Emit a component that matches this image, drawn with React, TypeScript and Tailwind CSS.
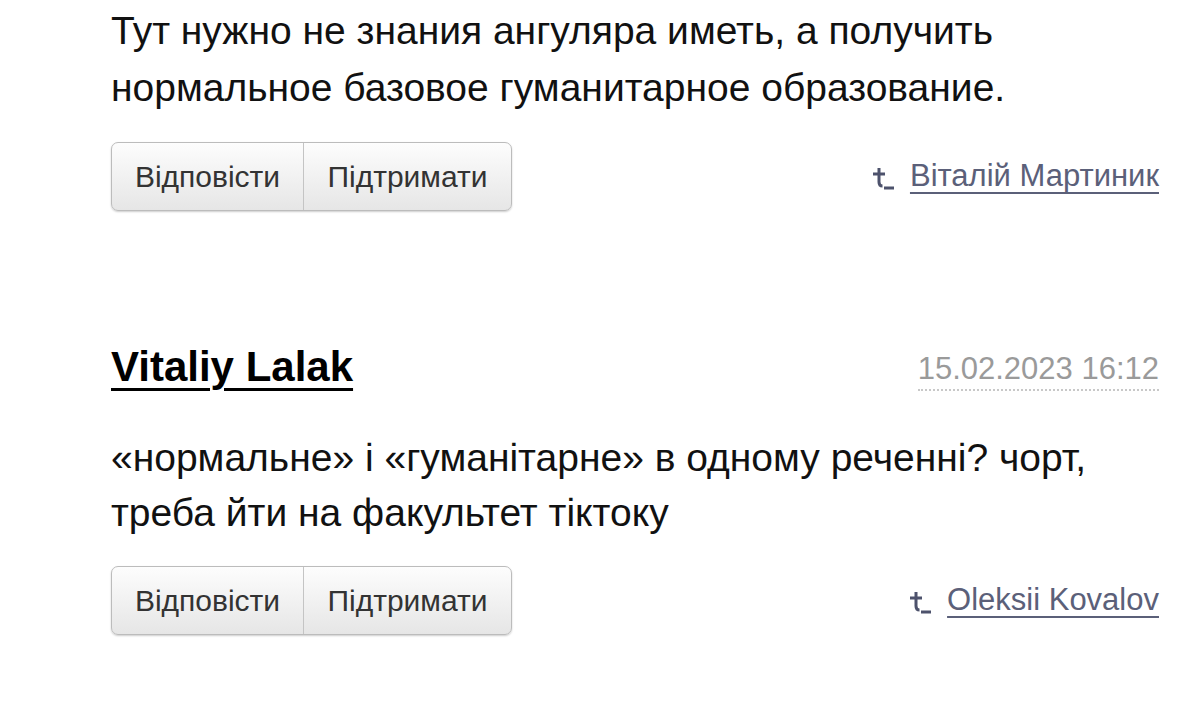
import React from "react";

type Comment = {
  author?: string;
  date?: string;
  lines: string[];
  parent: string;
};

const comments: Comment[] = [
  {
    lines: [
      "Тут нужно не знания ангуляра иметь, а получить",
      "нормальное базовое гуманитарное образование.",
    ],
    parent: "Віталій Мартиник",
  },
  {
    author: "Vitaliy Lalak",
    date: "15.02.2023 16:12",
    lines: [
      "«нормальне» і «гуманітарне» в одному реченні? чорт,",
      "треба йти на факультет тіктоку",
    ],
    parent: "Oleksii Kovalov",
  },
];

function ParentIcon() {
  return (
    <svg width="24" height="26" viewBox="0 0 24 26" fill="none" className="shrink-0">
      <path
        d="M7 4v14c0 2.5 1 4 3.5 4M1 10h12M12 24h10"
        stroke="#4d526c"
        strokeWidth="3"
      />
    </svg>
  );
}

function Actions({ parent }: { parent: string }) {
  return (
    <div className="flex items-center justify-between">
      <div className="flex h-[69px] overflow-hidden rounded-[7px] border border-[#bcbcbc] bg-gradient-to-b from-[#fdfdfd] to-[#e6e6e6] shadow-[0_1px_2px_rgba(0,0,0,0.2)]">
        <button className="w-[192px] text-[30px] text-[#333] border-r border-[#c4c4c4]">
          Відповісти
        </button>
        <button className="w-[207px] text-[30px] text-[#333]">Підтримати</button>
      </div>
      <a className="flex items-center gap-[14px] text-[31px] text-[#5b6079] underline decoration-[2px] underline-offset-[6px]">
        <ParentIcon />
        {parent}
      </a>
    </div>
  );
}

export default function App() {
  return (
    <div className="min-h-[702px] bg-white font-['Liberation_Sans',Arial,sans-serif]">
      <div className="mx-[111px] w-[1048px] pt-[2px]">
        {comments.map((c, i) => (
          <div key={i} className={i > 0 ? "mt-[132px]" : ""}>
            {c.author && (
              <div className="mb-[39px] flex items-end justify-between">
                <a className="text-[42px] font-bold leading-[48px] text-black underline decoration-[3px] underline-offset-[7px]">
                  {c.author}
                </a>
                <span className="border-b-2 border-dotted border-[#c8c8c8] pb-[2px] text-[31px] leading-[36px] text-[#9a9a9a]">
                  {c.date}
                </span>
              </div>
            )}
            <div className={`text-[39px] text-[#111] ${i > 0 ? "leading-[55px]" : "leading-[57px]"}`}>
              {c.lines.map((l) => (
                <div key={l}>{l}</div>
              ))}
            </div>
            <div className="mt-[26px]">
              <Actions parent={c.parent} />
            </div>
          </div>
        ))}
      </div>
    </div>
  );
}
